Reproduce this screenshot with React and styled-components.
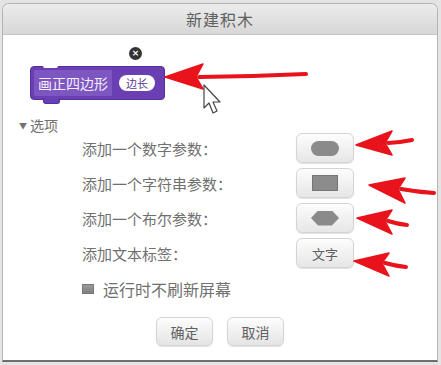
import React from 'react';
import styled, {createGlobalStyle} from 'styled-components';

const GlobalStyle = createGlobalStyle`
  html, body {
    margin: 0;
    padding: 0;
    background: #e4e4e4;
    font-family: "Noto Sans CJK SC", "Noto Sans", sans-serif;
  }
`;

const Page = styled.div`
  position: relative;
  width: 441px;
  height: 365px;
  overflow: hidden;
  padding-top: 3px;
  box-sizing: border-box;
`;

const Dialog = styled.div`
  margin-left: 2px;
  width: 436px;
  height: 359px;
  box-sizing: border-box;
  background: #fff;
  border: 1px solid #b4b4b4;
  border-bottom: 2px solid #6e6e6e;
  border-radius: 7px 7px 0 0;
  overflow: hidden;
  display: flex;
  flex-direction: column;
`;

const Header = styled.div`
  height: 31px;
  flex: none;
  box-sizing: border-box;
  background: linear-gradient(#ececec, #d7d7d7);
  border-bottom: 1px solid #c4c4c4;
  display: flex;
  align-items: center;
  justify-content: center;
  color: #606060;
  font-size: 16px;
  letter-spacing: 1px;
`;

const Body = styled.div`
  display: flex;
  flex-direction: column;
  color: #707070;
`;

const BlockArea = styled.div`
  position: relative;
  padding: 31px 0 0 27px;
  height: 34px;
`;

const CloseDot = styled.div`
  position: absolute;
  left: 126px;
  top: 12px;
  width: 13px;
  height: 13px;
  border-radius: 50%;
  background: #333;
  color: #fff;
  font-size: 9px;
  line-height: 13px;
  text-align: center;
  font-family: "DejaVu Sans", sans-serif;
  font-weight: bold;
`;

const Block = styled.div`
  position: relative;
  display: inline-flex;
  align-items: center;
  gap: 7px;
  height: 34px;
  box-sizing: border-box;
  padding: 0 9px 0 3px;
  background: #6b3fb4;
  border: 1px solid #55309a;
  border-radius: 4px;
  &::before {
    content: '';
    position: absolute;
    left: 12px;
    top: -1px;
    width: 15px;
    height: 2px;
    background: #fff;
    border-radius: 0 0 3px 3px;
  }
  &::after {
    content: '';
    position: absolute;
    left: 12px;
    bottom: -5px;
    width: 15px;
    height: 5px;
    background: #6b3fb4;
    border: 1px solid #55309a;
    border-top: none;
    border-radius: 0 0 3px 3px;
  }
`;

const BlockLabel = styled.span`
  padding: 0 4px;
  height: 26px;
  line-height: 26px;
  color: #f4f0fa;
  font-size: 14px;
  background: #7e56c2;
`;

const ParamPill = styled.span`
  width: 36px;
  height: 16px;
  border-radius: 8px;
  background: #fff;
  color: #5b3a92;
  font-size: 11px;
  line-height: 16px;
  text-align: center;
`;

const OptionsToggle = styled.div`
  margin: 17px 0 0 16px;
  height: 16px;
  line-height: 16px;
  font-size: 14px;
  color: #707070;
  span {
    font-size: 8px;
    margin-right: 3px;
    vertical-align: 2px;
  }
`;

const Rows = styled.div`
  display: flex;
  flex-direction: column;
  gap: 5px;
  padding-left: 79px;
`;

const Row = styled.div`
  display: grid;
  grid-template-columns: 214px 58px;
  align-items: center;
  height: 30px;
  font-size: 15px;
  color: #707070;
`;

const ShapeButton = styled.div`
  width: 58px;
  height: 30px;
  box-sizing: border-box;
  border: 1px solid #d4d4d4;
  border-radius: 6px;
  background: linear-gradient(#fdfdfd, #e6e6e6);
  box-shadow: 0 1px 1px rgba(0, 0, 0, 0.12);
  display: flex;
  align-items: center;
  justify-content: center;
  font-size: 13px;
  color: #606060;
`;

const Oval = styled.div`
  width: 28px;
  height: 15px;
  border-radius: 8px;
  background: #8a8a8a;
`;

const Rect = styled.div`
  width: 26px;
  height: 16px;
  box-sizing: border-box;
  background: #8c8c8c;
  border: 1px solid #777;
`;

const Hexagon = styled.div`
  width: 28px;
  height: 15px;
  background: #8a8a8a;
  clip-path: polygon(25% 0, 75% 0, 100% 50%, 75% 100%, 25% 100%, 0 50%);
`;

const CheckRow = styled.label`
  margin: 11px 0 0 79px;
  height: 20px;
  display: flex;
  align-items: center;
  gap: 9px;
  font-size: 16px;
  color: #707070;
`;

const CheckBox = styled.span`
  width: 12px;
  height: 10px;
  background: linear-gradient(#9a9a9a, #808080);
  border: 1px solid #777;
  box-sizing: border-box;
`;

const Footer = styled.div`
  margin-top: 18px;
  display: flex;
  justify-content: center;
  gap: 14px;
`;

const FooterButton = styled.div`
  width: 57px;
  height: 29px;
  box-sizing: border-box;
  border: 1px solid #d4d4d4;
  border-radius: 6px;
  background: linear-gradient(#fdfdfd, #e4e4e4);
  box-shadow: 0 1px 1px rgba(0, 0, 0, 0.12);
  display: flex;
  align-items: center;
  justify-content: center;
  font-size: 14px;
  color: #606060;
`;

const Overlay = styled.svg`
  position: absolute;
  left: 0;
  top: 0;
  pointer-events: none;
`;

const Arrow = ({tail, tip, base, spread}) => {
  const [tx, ty] = tail;
  const [px, py] = tip;
  const [bx, by] = base;
  return (
    <g fill="#e8131b" stroke="#e8131b" strokeLinecap="round" strokeLinejoin="round">
      <path d={`M${tx} ${ty} Q${(tx + bx) / 2} ${(ty + by) / 2 + 1} ${bx} ${by}`} strokeWidth="4" fill="none" />
      <polygon points={`${px},${py} ${bx + 4},${by - spread[0]} ${bx - 3},${by} ${bx + 4},${by + spread[1]}`} strokeWidth="1.5" />
    </g>
  );
};

const Annotations = () => (
  <Overlay width="441" height="365" viewBox="0 0 441 365">
    <Arrow tail={[306, 74]} tip={[165, 77]} base={[199, 77]} spread={[13, 12]} />
    <Arrow tail={[412, 140]} tip={[356, 145]} base={[388, 143]} spread={[12, 12]} />
    <Arrow tail={[434, 193]} tip={[369, 185]} base={[401, 189]} spread={[11, 14]} />
    <Arrow tail={[407, 225]} tip={[357, 218]} base={[388, 221]} spread={[11, 13]} />
    <Arrow tail={[406, 267]} tip={[354, 261]} base={[385, 263]} spread={[10, 13]} />
    <path
      d="M204 85 L204 108 L209 103 L213 113 L217 111 L213 102 L220 102 Z"
      fill="#fff"
      stroke="#444"
      strokeWidth="1.2"
      strokeLinejoin="round"
    />
  </Overlay>
);

export default function App() {
  return (
    <Page>
      <GlobalStyle />
      <Dialog>
        <Header>新建积木</Header>
        <Body>
          <BlockArea>
            <CloseDot>×</CloseDot>
            <Block>
              <BlockLabel>画正四边形</BlockLabel>
              <ParamPill>边长</ParamPill>
            </Block>
          </BlockArea>
          <OptionsToggle><span>▼</span>选项</OptionsToggle>
          <Rows>
            <Row>添加一个数字参数：<ShapeButton><Oval /></ShapeButton></Row>
            <Row>添加一个字符串参数：<ShapeButton><Rect /></ShapeButton></Row>
            <Row>添加一个布尔参数：<ShapeButton><Hexagon /></ShapeButton></Row>
            <Row>添加文本标签：<ShapeButton>文字</ShapeButton></Row>
          </Rows>
          <CheckRow><CheckBox />运行时不刷新屏幕</CheckRow>
          <Footer>
            <FooterButton>确定</FooterButton>
            <FooterButton>取消</FooterButton>
          </Footer>
        </Body>
      </Dialog>
      <Annotations />
    </Page>
  );
}
